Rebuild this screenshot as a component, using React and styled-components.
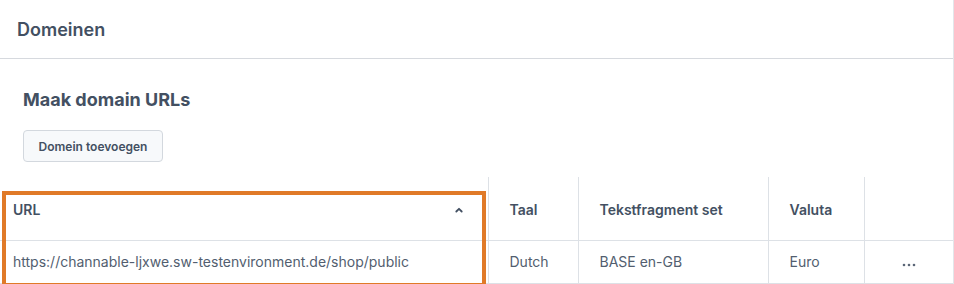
import React from "react"
import styled, { createGlobalStyle } from "styled-components"

const GlobalStyle = createGlobalStyle`
  html, body {
    margin: 0;
    padding: 0;
    background: #fff;
    font-family: Inter, "Noto Sans", "Liberation Sans", sans-serif;
    -webkit-font-smoothing: antialiased;
  }
`

const Card = styled.div`
  width: 953px;
  height: 284px;
  border-right: 1px solid #e3e6ea;
  background: #fff;
  overflow: hidden;
`

const CardHeader = styled.div`
  height: 58px;
  display: flex;
  align-items: center;
  padding-left: 17px;
  border-bottom: 1px solid #d6d9de;
  font-size: 18px;
  font-weight: 600;
  color: #435062;
`

const Intro = styled.div`
  padding: 29px 23px 15px;
  display: flex;
  flex-direction: column;
  align-items: flex-start;
`

const Title = styled.h2`
  margin: 0 0 18px;
  font-size: 18px;
  line-height: 24px;
  font-weight: 700;
  color: #435062;
`

const Button = styled.button`
  height: 32px;
  width: 140px;
  padding: 0;
  border: 1px solid #d3d8de;
  border-radius: 4px;
  background: #f7f9fb;
  font-family: inherit;
  font-size: 12px;
  font-weight: 600;
  color: #435062;
`

const TableWrap = styled.div`
  position: relative;
`

const Table = styled.table`
  width: 953px;
  border-collapse: collapse;
  table-layout: fixed;
`

const Th = styled.th`
  box-sizing: border-box;
  width: ${({ w }) => w}px;
  height: 63px;
  padding: 3px 0 0 ${({ pad }) => pad ?? 21}px;
  text-align: left;
  font-size: 14px;
  font-weight: 600;
  color: #435062;
  border-bottom: 1px solid #dde1e6;
  border-left: ${({ first }) => (first ? "none" : "1px solid #dde1e6")};
`

const Td = styled.td`
  box-sizing: border-box;
  height: 43px;
  padding: 0 0 0 ${({ pad }) => pad ?? 21}px;
  font-size: 14px;
  color: #525e6f;
  white-space: nowrap;
  text-align: ${({ center }) => (center ? "center" : "left")};
  border-bottom: 1px solid #dde1e6;
  border-left: ${({ first }) => (first ? "none" : "1px solid #dde1e6")};
`

const HeadInner = styled.div`
  display: flex;
  align-items: center;
  justify-content: space-between;
  padding-right: 25px;
`

const Highlight = styled.div`
  position: absolute;
  left: 2px;
  top: 14px;
  width: 484px;
  height: 96px;
  box-sizing: border-box;
  border: 4px solid #e07a28;
  pointer-events: none;
`

const Chevron = () => (
  <svg width="8" height="6" viewBox="0 0 8 6">
    <polyline
      points="1.3,4.5 4,1.8 6.7,4.5"
      fill="none"
      stroke="#435062"
      strokeWidth="1.8"
      strokeLinecap="round"
      strokeLinejoin="round"
    />
  </svg>
)

const Dots = () => (
  <svg width="14" height="4" viewBox="0 0 14 4">
    <circle cx="2" cy="2" r="1.3" fill="#5b6677" />
    <circle cx="7" cy="2" r="1.3" fill="#5b6677" />
    <circle cx="12" cy="2" r="1.3" fill="#5b6677" />
  </svg>
)

export default function App() {
  return (
    <>
      <GlobalStyle />
      <Card>
        <CardHeader>Domeinen</CardHeader>
        <Intro>
          <Title>Maak domain URLs</Title>
          <Button>Domein toevoegen</Button>
        </Intro>
        <TableWrap>
          <Table>
            <thead>
              <tr>
                <Th w={488} pad={13} first>
                  <HeadInner>
                    URL
                    <Chevron />
                  </HeadInner>
                </Th>
                <Th w={90}>Taal</Th>
                <Th w={190}>Tekstfragment set</Th>
                <Th w={96}>Valuta</Th>
                <Th w={89} />
              </tr>
            </thead>
            <tbody>
              <tr>
                <Td pad={13} first>
                  https://channable-ljxwe.sw-testenvironment.de/shop/public
                </Td>
                <Td>Dutch</Td>
                <Td>BASE en-GB</Td>
                <Td>Euro</Td>
                <Td pad={0} center>
                  <Dots />
                </Td>
              </tr>
            </tbody>
          </Table>
          <Highlight />
        </TableWrap>
      </Card>
    </>
  )
}
